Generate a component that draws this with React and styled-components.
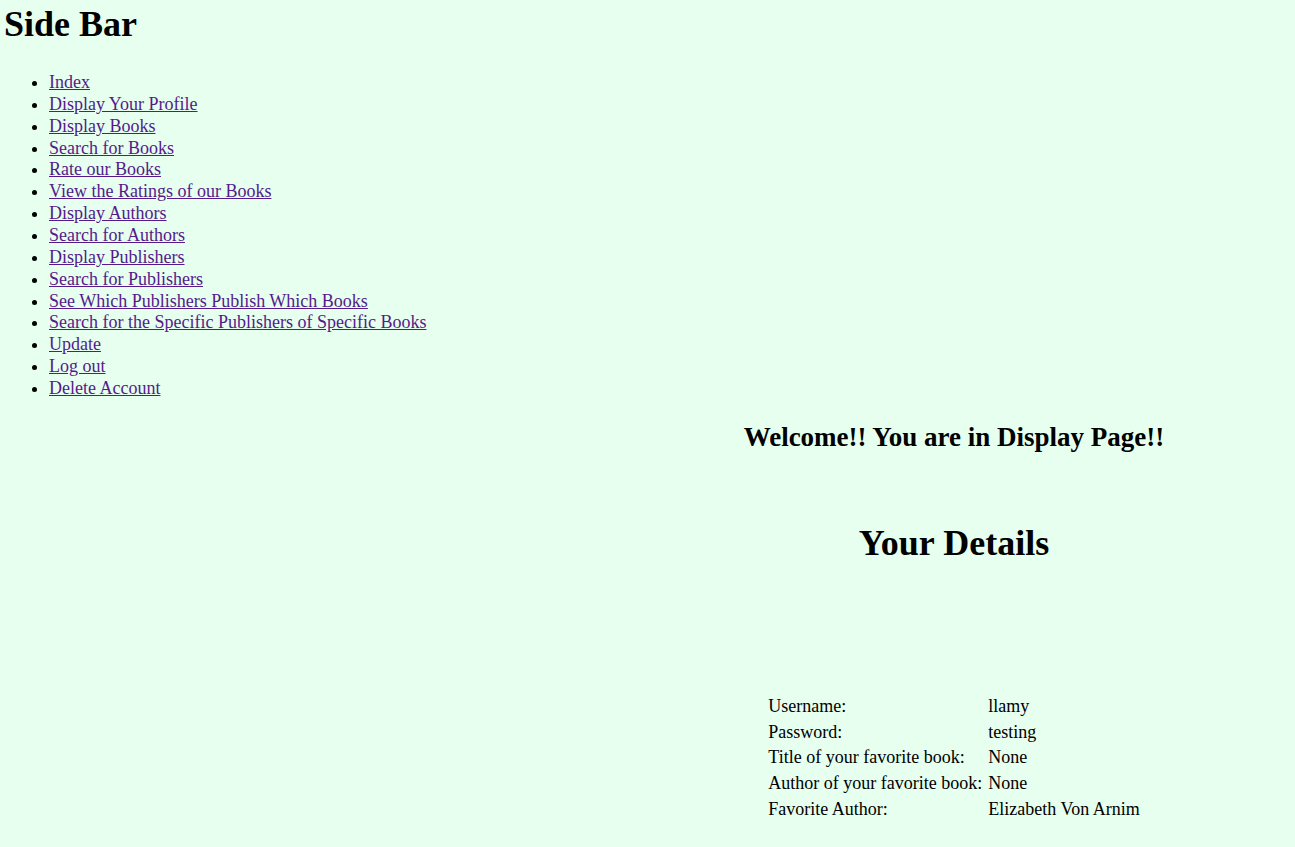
import React from 'react';
import styled, { createGlobalStyle } from 'styled-components';

const GlobalStyle = createGlobalStyle`
  html, body {
    margin: 0;
    background: #e6ffee;
  }
  body {
    font-family: "Liberation Serif", "Times New Roman", serif;
    font-size: 18px;
    color: #000;
  }
`;

const Page = styled.div`
  display: flex;
  flex-direction: column;
`;

const SideBar = styled.nav`
  padding: 3px 4px 0;
`;

const SideTitle = styled.h1`
  font-size: 36px;
  font-weight: bold;
  margin: 0 0 27px;
`;

const LinkList = styled.ul`
  margin: 0;
  padding-left: 45px;
  list-style: disc;
  line-height: 21.86px;
`;

const Link = styled.a`
  color: #551a8b;
  text-decoration: underline;
`;

const Main = styled.main`
  margin-left: 613px;
  display: flex;
  flex-direction: column;
  align-items: center;
  padding-top: 22px;
`;

const Welcome = styled.h2`
  font-size: 27px;
  font-weight: bold;
  margin: 0 0 69px;
`;

const Details = styled.h1`
  font-size: 36px;
  font-weight: bold;
  margin: 0 0 129px;
`;

const InfoTable = styled.table`
  border-spacing: 2px;
  font-size: 18px;
  line-height: 21.7px;
`;

const Cell = styled.td`
  padding: 1px ${p => (p.$label ? '3px' : '1px')} 1px 1px;
  text-align: left;
`;

const links = [
  'Index',
  'Display Your Profile',
  'Display Books',
  'Search for Books',
  'Rate our Books',
  'View the Ratings of our Books',
  'Display Authors',
  'Search for Authors',
  'Display Publishers',
  'Search for Publishers',
  'See Which Publishers Publish Which Books',
  'Search for the Specific Publishers of Specific Books',
  'Update',
  'Log out',
  'Delete Account',
];

const details = [
  ['Username:', 'llamy'],
  ['Password:', 'testing'],
  ['Title of your favorite book:', 'None'],
  ['Author of your favorite book:', 'None'],
  ['Favorite Author:', 'Elizabeth Von Arnim'],
];

export default function App() {
  return (
    <Page>
      <GlobalStyle />
      <SideBar>
        <SideTitle>Side Bar</SideTitle>
        <LinkList>
          {links.map(l => (
            <li key={l}><Link href="#">{l}</Link></li>
          ))}
        </LinkList>
      </SideBar>
      <Main>
        <Welcome>Welcome!! You are in Display Page!!</Welcome>
        <Details>Your Details</Details>
        <InfoTable>
          <tbody>
            {details.map(([k, v]) => (
              <tr key={k}>
                <Cell $label>{k}</Cell>
                <Cell>{v}</Cell>
              </tr>
            ))}
          </tbody>
        </InfoTable>
      </Main>
    </Page>
  );
}
